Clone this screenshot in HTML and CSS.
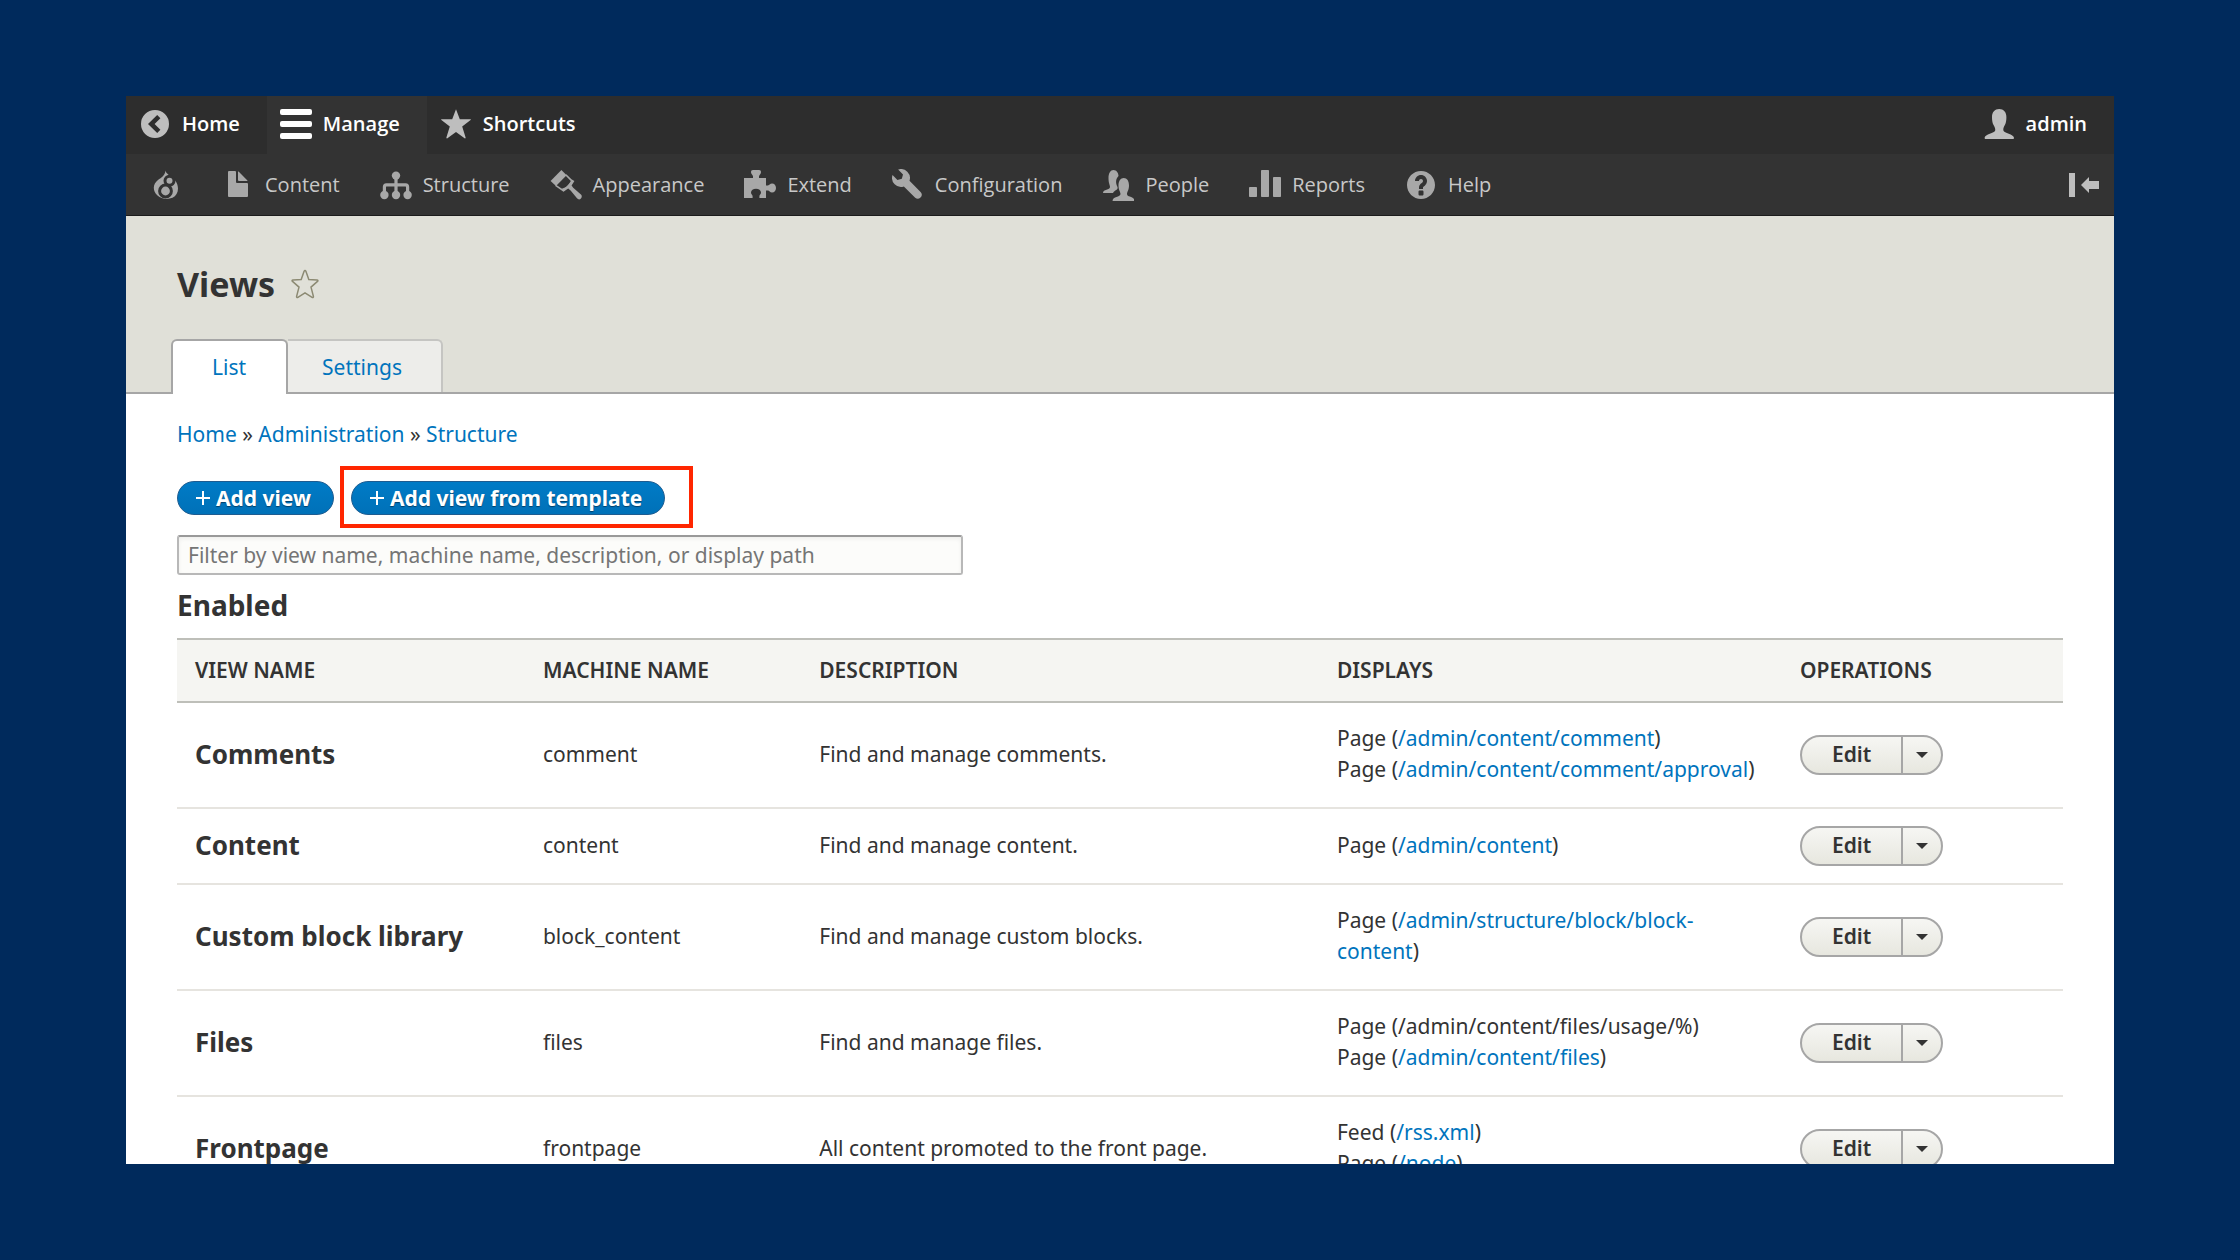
FILE: index.html
```html
<!DOCTYPE html>
<html lang="en">
<head>
    <meta charset="UTF-8">
    <meta name="viewport" content="width=device-width, initial-scale=1.0">
    <title>Views</title>
    <link rel="stylesheet" href="styles.css">
</head>
<body>
    <div class="window">
        <nav class="toolbar" aria-label="Toolbar">
            <a class="toolbar-item" href="#">
                <svg class="icon" viewBox="0 0 16 16"><path fill-rule="evenodd" d="M8 1a7 7 0 1 0 0 14A7 7 0 0 0 8 1zm2.7 9.9-1.6 1.6L4.5 8l4.6-4.5 1.6 1.6L7.8 8z"/></svg>
                Home
            </a>
            <a class="toolbar-item active" href="#">
                <svg class="icon" viewBox="0 0 16 16"><rect y=".5" width="16" height="3" rx="1"/><rect y="6.5" width="16" height="3" rx="1"/><rect y="12.5" width="16" height="3" rx="1"/></svg>
                Manage
            </a>
            <a class="toolbar-item" href="#">
                <svg class="icon" viewBox="0 0 16 16"><path d="M8 .6l1.9 5h5.3c.3 0 .3.3.1.4L11.1 9.3l1.7 5.5c.1.4-.2.5-.5.3L8 12l-4.3 3.1c-.3.2-.6.1-.5-.3l1.7-5.5L.7 6c-.2-.1-.2-.4.1-.4h5.3z"/></svg>
                Shortcuts
            </a>
            <a class="toolbar-item user" href="#">
                <svg class="icon" viewBox="0 0 16 16"><path d="M15.5 14.9c0 .4-.2.6-.5.6H1.3c-.3 0-.5-.2-.5-.6.2-2 5-2.3 5.3-3.7.2-1.1-.3-1.6-.9-2.8C4.7 7.3 4.5 6 4.5 4.6 4.5 2 5.9.5 8.1.5s3.6 1.5 3.6 4.1c0 1.4-.2 2.7-.7 3.8-.6 1.2-1 1.7-.8 2.8.3 1.4 5.1 1.7 5.3 3.7z"/></svg>
                admin
            </a>
        </nav>
        <nav class="tray" aria-label="Administration menu">
            <a class="tray-item" href="#" aria-label="Tools">
                <svg class="icon" viewBox="0 0 32 32"><path d="M15.5 1.5c.7 5.5 12.5 7 12.5 18 0 4-2 7.5-5.5 9.3-5 2-11 1.5-15-2.3C2.5 22 2.5 15 8 11c3.5-2.500 7-4.500 7.500-9.500z"/><g class="cut"><circle cx="19.5" cy="11.7" r="4.5"/><circle cx="15.5" cy="22" r="5.9"/></g></svg>
            </a>
            <a class="tray-item" href="#">
                <svg class="icon" viewBox="0 0 16 16"><path d="M12.5 7h-5A.5.5 0 0 1 7 6.5v-5a.5.5 0 0 0-.5-.5h-3a.5.5 0 0 0-.5.5v12a.5.5 0 0 0 .5.5h9a.5.5 0 0 0 .5-.5v-6a.5.5 0 0 0-.5-.5zM8.5 6h4c.3 0 .3-.2.1-.4L8.4 1.4c-.2-.2-.4-.1-.4.1v4a.5.5 0 0 0 .5.5z"/></svg>
                Content
            </a>
            <a class="tray-item" href="#">
                <svg class="icon" viewBox="0 0 16 16"><circle cx="8" cy="3.3" r="2.1"/><circle cx="2.2" cy="13" r="2.1"/><circle cx="8" cy="13" r="2.1"/><circle cx="13.8" cy="13" r="2.1"/><path class="line" d="M8 4v9M2.2 12V9c0-.7.3-1.1 1-1.1h9.6c.7 0 1 .4 1 1.1v3"/></svg>
                Structure
            </a>
            <a class="tray-item" href="#">
                <svg class="icon" viewBox="0 0 16 16"><path d="M5.7.5 8.3 3.1 3 8.5.3 6z"/><path class="thin" d="M7.9 2.9l3.4 3.4-4.6 4.5-3.9-2.6"/><path d="M5.6 10l1.3 1.3 2.2-1.5 1.2 1 3.3 4c1.2 1.2 3-.6 2-1.900l-4-3.500-.8-1.200L12.200 6l-1.300-.8-2.200 3.500z"/></svg>
                Appearance
            </a>
            <a class="tray-item" href="#">
                <svg class="icon" viewBox="0 0 16 16"><path d="M0 4.5h4.5V3.6C4.5 3 3.5 2.6 3.5 1.6c0-.7.3-1.1 1-1.1h3c.7 0 1 .4 1 1.1 0 1-1 1.4-1 2v.9H11v3.7h1c.6 0 1-.9 2-.9 1.2 0 2 1 2 2.2s-.8 2.3-2 2.3c-1 0-1.4-1-2-1h-1v3.7H7.7v-.9c0-.5.8-.9.8-1.800 0-1.200-1.100-1.900-2.500-1.900s-2.500.7-2.500 1.900c0 .9.8 1.300.8 1.800v.9H0z"/></svg>
                Extend
            </a>
            <a class="tray-item" href="#">
                <svg class="icon" viewBox="0 0 16 16"><path d="M14.4 11.6 8.75 5.92A4.5 4.5 0 0 0 3.07.25L5.5 2.69 4.91 4.88 2.71 5.47.27 3.03A4.5 4.5 0 0 0 5.92 8.75l5.67 5.66a2 2 0 0 0 2.81-2.81z"/></svg>
                Configuration
            </a>
            <a class="tray-item" href="#">
                <svg class="icon" viewBox="0 0 32 32"><path d="M1 24c0-4 7-3 7-6 0-2-1.5-3.5-1.5-9C6.5 4 8.5 1 11.5 1s5 3 5 6c-3 3-3 7-1 11 1 3-3 3-4.5 6z"/><path d="M10.5 32c0-5 8-3.5 8-7 0-2-2-4-2-8.5 0-4.5 2-7.5 5.3-7.5s5.2 3 5.2 7.5c0 4.5-2 6.5-2 8.5 0 3.5 7.5 2 7.5 7z"/></svg>
                People
            </a>
            <a class="tray-item" href="#">
                <svg class="icon" viewBox="0 0 16 16"><rect y="9" width="4" height="5" rx=".4"/><rect x="6" y=".5" width="4" height="13.5" rx=".4"/><rect x="12" y="4" width="4" height="10" rx=".4"/></svg>
                Reports
            </a>
            <a class="tray-item" href="#">
                <svg class="icon" viewBox="0 0 16 16"><path d="M8.002 1c-3.868 0-7.002 3.134-7.002 7s3.134 7 7.002 7c3.865 0 7-3.134 7-7s-3.135-7-7-7zm3 5c0 .551-.16 1.085-.477 1.586l-.158.22c-.07.093-.189.241-.361.393-.168.148-.35.299-.545.447l-.203.189-.141.129-.096.17-.021.235v.63h-2.001v-.704c.026-.396.078-.73.204-.999.125-.269.271-.498.439-.688l.225-.21-.01-.015.176-.14.137-.128c.186-.139.357-.277.516-.417l.148-.18c.098-.152.168-.323.168-.518 0-.552-.447-1-1.001-1-.554 0-1.001.448-1.001 1h-2c0-1.657 1.343-3 3-3 1.657 0 3.002 1.343 3.002 3zm-1.75 6.619c0 .344-.281.625-.625.625h-1.25c-.345 0-.626-.281-.626-.625v-1.238c0-.344.281-.625.626-.625h1.25c.344 0 .625.281.625.625v1.238z"/></svg>
                Help
            </a>
            <button class="tray-toggle" type="button" aria-label="Vertical orientation">
                <svg class="icon" viewBox="0 0 32 32"><path d="M1 4h6v24H1zM13 16l8-8v4h10v8H21v4z"/></svg>
            </button>
        </nav>

        <header class="header">
            <div class="title">
                <h1>Views</h1>
                <button class="star" type="button" aria-label="Add to shortcuts">
                    <svg viewBox="0 0 28 30"><path d="M14 1.5c.5 0 .8.5 1 1l2.8 8 8.2.4c1 .1 1.3.8.5 1.5L20 18.1l2.4 9.2c.2 1-.5 1.5-1.3 1L14 23.8l-7.1 4.5c-.8.5-1.5 0-1.3-1L8 18.1l-6.5-5.7c-.8-.7-.5-1.4.5-1.5l8.2-.4 2.8-8c.2-.5.5-1 1-1z"/></svg>
                </button>
            </div>
            <nav class="tabs" aria-label="Tabs">
                <a class="tab active" href="#">List</a>
                <a class="tab" href="#">Settings</a>
            </nav>
        </header>

        <main class="content">
            <nav class="breadcrumb" aria-label="Breadcrumb">
                <a href="#">Home</a> » <a href="#">Administration</a> » <a href="#">Structure</a>
            </nav>
            <div class="actions">
                <a class="button-action" href="#"><svg class="plus" viewBox="0 0 14 14"><path d="M7 0v14M0 7h14"/></svg>Add view</a>
                <div class="highlight">
                    <a class="button-action" href="#"><svg class="plus" viewBox="0 0 14 14"><path d="M7 0v14M0 7h14"/></svg>Add view from template</a>
                </div>
            </div>
            <input class="filter" type="search" aria-label="Filter views" placeholder="Filter by view name, machine name, description, or display path">

            <h2>Enabled</h2>
            <table class="views">
                <thead>
                    <tr>
                        <th class="col-name">View name</th>
                        <th class="col-machine">Machine name</th>
                        <th class="col-description">Description</th>
                        <th class="col-displays">Displays</th>
                        <th>Operations</th>
                    </tr>
                </thead>
                <tbody>
                    <tr>
                        <td><h3>Comments</h3></td>
                        <td>comment</td>
                        <td>Find and manage comments.</td>
                        <td>Page (<a href="#">/admin/content/comment</a>)<br>Page (<a href="#">/admin/content/comment/approval</a>)</td>
                        <td><div class="dropbutton"><a href="#">Edit</a><button type="button" aria-label="List additional actions"></button></div></td>
                    </tr>
                    <tr>
                        <td><h3>Content</h3></td>
                        <td>content</td>
                        <td>Find and manage content.</td>
                        <td>Page (<a href="#">/admin/content</a>)</td>
                        <td><div class="dropbutton"><a href="#">Edit</a><button type="button" aria-label="List additional actions"></button></div></td>
                    </tr>
                    <tr>
                        <td><h3>Custom block library</h3></td>
                        <td>block_content</td>
                        <td>Find and manage custom blocks.</td>
                        <td>Page (<a href="#">/admin/structure/block/block-content</a>)</td>
                        <td><div class="dropbutton"><a href="#">Edit</a><button type="button" aria-label="List additional actions"></button></div></td>
                    </tr>
                    <tr>
                        <td><h3>Files</h3></td>
                        <td>files</td>
                        <td>Find and manage files.</td>
                        <td>Page (/admin/content/files/usage/%)<br>Page (<a href="#">/admin/content/files</a>)</td>
                        <td><div class="dropbutton"><a href="#">Edit</a><button type="button" aria-label="List additional actions"></button></div></td>
                    </tr>
                    <tr>
                        <td><h3>Frontpage</h3></td>
                        <td>frontpage</td>
                        <td>All content promoted to the front page.</td>
                        <td>Feed (<a href="#">/rss.xml</a>)<br>Page (<a href="#">/node</a>)</td>
                        <td><div class="dropbutton"><a href="#">Edit</a><button type="button" aria-label="List additional actions"></button></div></td>
                    </tr>
                </tbody>
            </table>
        </main>
    </div>
</body>
</html>
```
FILE: styles.css
```css
* {
    box-sizing: border-box;
}
body {
    height: 100vh;
    margin: 0;
    padding: 96px 126px;
    background-color: #002a5c;
    font-family: "Noto Sans", sans-serif;
    font-size: 21px;
    line-height: 31px;
    color: #333;
}
a {
    color: #0074bd;
    text-decoration: none;
}
h1, h2, h3 {
    margin: 0;
    font-weight: 700;
}
.window {
    height: 100%;
    overflow: hidden;
    background-color: #fff;
}

/* Toolbar */
.toolbar {
    display: flex;
    height: 58px;
    background-color: #2d2d2d;
}
.toolbar-item,
.tray-item {
    display: flex;
    align-items: center;
    gap: 11px;
    font-family: "Open Sans", sans-serif;
    font-size: 20px;
}
.toolbar-item {
    padding: 0 27px 3px 13px;
    font-weight: 600;
    color: #fff;
}
.toolbar-item.active {
    background-color: #333;
}
.toolbar-item.user {
    margin-left: auto;
}
.icon {
    width: 32px;
    height: 32px;
    fill: #bebebe;
}
.active .icon {
    fill: #fff;
}
.tray {
    display: flex;
    height: 62px;
    padding-left: 12px;
    background-color: #333;
    border-bottom: 1px solid #1c1c1c;
}
.tray-item {
    padding: 0 28px 0 12px;
    color: #c8c8c8;
}
.tray-item .icon {
    fill: #a8a8a8;
}
.icon .cut {
    stroke: #333;
    stroke-width: 3;
}
.icon .line {
    fill: none;
    stroke: #a8a8a8;
    stroke-width: 1.6;
}
.icon .thin {
    fill: none;
    stroke: #a8a8a8;
    stroke-width: .8;
}
.tray-toggle {
    display: flex;
    align-items: center;
    margin-left: auto;
    padding: 0 14px;
    background: none;
    border: none;
}

/* Page header */
.header {
    padding: 46px 45px 0;
    background-color: #e0e0d8;
    border-bottom: 2px solid #a6a6a6;
}
.title {
    display: flex;
    align-items: center;
    gap: 16px;
    padding-left: 6px;
}
h1 {
    font-size: 34px;
    line-height: 44px;
}
.star {
    padding: 0;
    background: none;
    border: none;
}
.star svg {
    display: block;
    width: 28px;
    height: 30px;
    fill: none;
    stroke: #8c8a73;
    stroke-width: 1.5;
}
.tabs {
    display: flex;
    margin: 33px 0 -2px;
}
.tab {
    height: 53px;
    padding: 11px 39px 0 34px;
    background-color: #ededea;
    border: 2px solid #c5c5c2;
    border-width: 2px 2px 0 0;
    border-radius: 0 6px 0 0;
}
.tab.active {
    height: 55px;
    padding: 11px 40px 0 39px;
    background-color: #fff;
    border-color: #a6a6a6;
    border-left-width: 2px;
    border-radius: 6px 6px 0 0;
}

/* Content */
.content {
    padding: 25px 51px;
}
.actions {
    display: flex;
    gap: 17px;
    margin-top: 31px;
}
.button-action {
    display: flex;
    align-items: center;
    gap: 6px;
    height: 34px;
    padding: 0 22px 0 18px;
    background: linear-gradient(#007bc6, #0071b8);
    border: 1px solid #1e5c90;
    border-radius: 17px;
    font-weight: 700;
    color: #fff;
    text-shadow: 0 1px 1px #00406b;
}
.plus {
    width: 14px;
    height: 14px;
    stroke: #fff;
    stroke-width: 2;
}
.highlight {
    position: relative;
}
.highlight::after {
    content: "";
    position: absolute;
    inset: -15px -28px -13px -11px;
    border: 4px solid #ff2600;
    pointer-events: none;
}
.filter {
    display: block;
    width: 41.7%;
    height: 40px;
    margin-top: 20px;
    padding: 0 9px;
    background-color: #fcfcfa;
    border: 2px solid #b8b8b8;
    border-top-color: #999;
    border-radius: 3px;
    box-shadow: inset 0 2px 4px rgba(0, 0, 0, .06);
    font: inherit;
}
.filter::placeholder {
    color: #757575;
}
h2 {
    margin: 12px 0 15px;
    font-size: 28px;
    line-height: 36px;
}
.views {
    width: 100%;
    table-layout: fixed;
    border-collapse: collapse;
}
.views th {
    height: 63px;
    padding: 0 18px;
    background-color: #f5f5f2;
    border-top: 2px solid #bebfb9;
    border-bottom: 2px solid #bebfb9;
    font-weight: 600;
    text-align: left;
    text-transform: uppercase;
}
.views td {
    height: 76px;
    padding: 20px 18px 22px;
    border-bottom: 2px solid #e6e4df;
}
.views td:last-child {
    padding-top: 0;
    padding-bottom: 0;
}
.col-name {
    width: 18.45%;
}
.col-machine {
    width: 14.65%;
}
.col-description {
    width: 27.45%;
}
.col-displays {
    width: 24.55%;
}
h3 {
    font-size: 26px;
    line-height: 31px;
}
.dropbutton {
    display: inline-flex;
    height: 40px;
    vertical-align: middle;
    background: linear-gradient(#f6f6f3, #e7e7df);
    border: 2px solid #a6a6a6;
    border-radius: 20px;
    overflow: hidden;
}
.dropbutton a {
    padding: 2px 30px;
    font-weight: 600;
    color: #333;
}
.dropbutton button {
    display: flex;
    align-items: center;
    justify-content: center;
    width: 40px;
    padding: 0;
    background: none;
    border: none;
    border-left: 2px solid #a6a6a6;
}
.dropbutton button::before {
    content: "";
    border: 6px solid transparent;
    border-top-color: #333;
    border-bottom: 0;
}
```
